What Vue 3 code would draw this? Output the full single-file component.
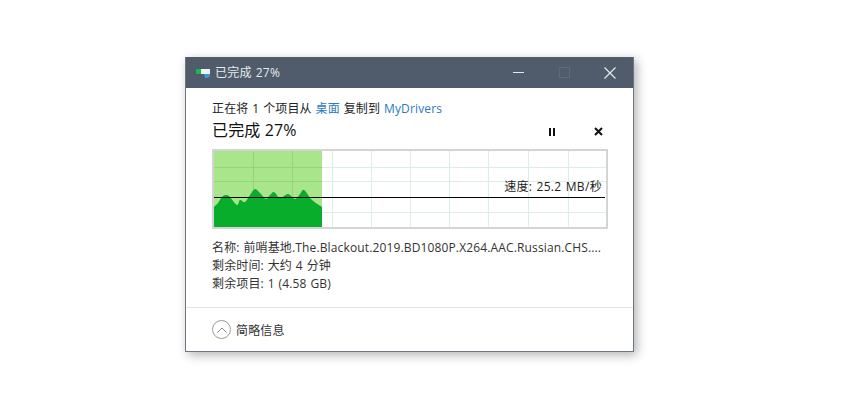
<script setup>
const hLines = [17, 31, 62]
const vLines = [41, 80, 120, 159, 198, 237, 276, 316, 356]
const peak = [[2,57],[6,53],[10,47],[14,45],[18,47],[25,55],[28,50],[33,52],[38,45],[43,39],[48,43],[54,49],[58,45],[62,42],[68,48],[76,44],[83,49],[88,44],[92,40],[100,50],[110,57]]

function smooth(points) {
  let d = `M2 77L${points[0][0]} ${points[0][1]}`
  for (let i = 0; i < points.length - 1; i++) {
    const p0 = points[Math.max(i - 1, 0)]
    const p1 = points[i]
    const p2 = points[i + 1]
    const p3 = points[Math.min(i + 2, points.length - 1)]
    const c1x = p1[0] + (p2[0] - p0[0]) / 6
    const c1y = p1[1] + (p2[1] - p0[1]) / 6
    const c2x = p2[0] - (p3[0] - p1[0]) / 6
    const c2y = p2[1] - (p3[1] - p1[1]) / 6
    d += `C${c1x} ${c1y} ${c2x} ${c2y} ${p2[0]} ${p2[1]}`
  }
  return d + 'L110 77Z'
}
const area = smooth(peak)
</script>

<template>
  <div class="page">
    <div class="win">
      <header class="title">
        <svg class="app" width="14" height="10" viewBox="0 0 14 10">
          <rect x="0" y="1" width="5" height="5" fill="#19b84a" />
          <rect x="5" y="1" width="9" height="5" fill="#eef3f5" />
          <path d="M8 6h6v2l-2 2H9z" fill="#3f97da" />
        </svg>
        <span class="title-text">已完成 27%</span>
        <div class="caps">
          <span class="cap"><i class="min"></i></span>
          <span class="cap"><i class="max"></i></span>
          <span class="cap">
            <svg width="12" height="12" viewBox="0 0 12 12"><path d="M.5.5l11 11M11.5.5l-11 11" stroke="#e6e9ec" stroke-width="1.2" fill="none" /></svg>
          </span>
        </div>
      </header>
      <main class="body">
        <p class="from">正在将 1 个项目从 <a>桌面</a> 复制到 <a>MyDrivers</a></p>
        <div class="head">
          <h1>已完成 27%</h1>
          <div class="ctrl">
            <svg width="8" height="8" viewBox="0 0 8 8"><path d="M1 0h2v8H1zM5 0h2v8H5z" fill="#111" /></svg>
            <svg width="9" height="9" viewBox="0 0 9 9"><path d="M1 1l7 7M8 1l-7 7" stroke="#111" stroke-width="2" fill="none" /></svg>
          </div>
        </div>
        <div class="chart">
          <svg width="396" height="80" viewBox="0 -1 396 80">
            <rect x="2" y="1" width="108" height="76" fill="#a8e58b" />
            <g stroke="#dcefe3" stroke-width="1">
              <line v-for="y in hLines" :key="y" x1="2" x2="394" :y1="y + .5" :y2="y + .5" />
              <line v-for="x in vLines" :key="x" :x1="x + .5" :x2="x + .5" y1="1" y2="77" />
            </g>
            <g stroke="#95d37c" stroke-width="1">
              <line v-for="y in hLines" :key="'g' + y" x1="2" x2="110" :y1="y + .5" :y2="y + .5" />
              <line v-for="x in vLines.slice(0, 2)" :key="'v' + x" :x1="x + .5" :x2="x + .5" y1="1" y2="77" />
            </g>
            <path :d="area" fill="#08ae2b" />
            <line x1="2" x2="393" y1="47.5" y2="47.5" stroke="#000" />
          </svg>
          <span class="speed">速度: 25.2 MB/秒</span>
        </div>
        <ul class="info">
          <li>名称: 前哨基地.The.Blackout.2019.BD1080P.X264.AAC.Russian.CHS....</li>
          <li>剩余时间: 大约 4 分钟</li>
          <li>剩余项目: 1 (4.58 GB)</li>
        </ul>
      </main>
      <footer class="foot">
        <span class="toggle">
          <svg width="10" height="6" viewBox="0 0 10 6"><path d="M.5 5.500L5 1l4.500 4.500" stroke="#8a8a8a" fill="none" /></svg>
        </span>
        <span>简略信息</span>
      </footer>
    </div>
  </div>
</template>

<style>
html, body { background: #fff; }
</style>

<style scoped>
.page {
  width: 841px;
  height: 410px;
  padding: 57px 0 0 185px;
  box-sizing: border-box;
  overflow: hidden;
  background: #fff;
  font-family: "Open Sans", "Noto Sans CJK SC", sans-serif;
  font-size: 12px;
  letter-spacing: .14px;
  word-spacing: .6px;
  color: #222;
}
.win {
  width: 447px;
  height: 294px;
  border: 1px solid #6d7680;
  border-top: 0;
  display: flex;
  flex-direction: column;
  background: #fff;
  box-shadow: 3px 3px 10px rgba(0, 0, 0, .3);
}
.title {
  height: 31px;
  flex: none;
  background: #505c6b;
  color: #e8ebee;
  display: flex;
  align-items: center;
  padding-left: 10px;
}
.app { margin-right: 5px; }
.title-text { line-height: 31px; letter-spacing: .25px; }
.caps { margin-left: auto; display: flex; align-items: center; }
.cap { width: 46px; height: 31px; display: flex; align-items: center; justify-content: center; }
.min { width: 11px; height: 1px; background: #e6e9ec; }
.max { width: 9px; height: 9px; border: 1px solid #5f6a78; }
.body { flex: 1; padding: 12px 26px 0 26px; }
.from { margin: 0; line-height: 18px; height: 18px; white-space: nowrap; }
.from a { color: #2b79c2; }
.head { display: flex; align-items: center; justify-content: space-between; height: 25px; }
h1 { margin: 0; font-size: 16px; font-weight: 400; line-height: 25px; color: #111; letter-spacing: .15px; word-spacing: 0; }
.ctrl { display: flex; align-items: center; gap: 38px; padding: 2px 4px 0 0; }
.chart {
  position: relative;
  width: 396px;
  height: 80px;
  margin-top: 6px;
  line-height: 0;
  outline: 2px solid #d4d4d4;
  outline-offset: -2px;
}
.chart svg { display: block; }
.speed { position: absolute; right: 6px; top: 29px; line-height: 18px; color: #222; white-space: nowrap; letter-spacing: .35px; word-spacing: .6px; }
.info { list-style: none; margin: 10px 0 0; padding: 0; }
.info li { line-height: 18px; white-space: nowrap; color: #333; }
.foot {
  height: 43px;
  flex: none;
  border-top: 1px solid #e3e3e3;
  display: flex;
  align-items: center;
  gap: 5px;
  padding-left: 26px;
  color: #333;
}
.toggle {
  width: 17px;
  height: 17px;
  border: 1px solid #9a9a9a;
  border-radius: 50%;
  display: flex;
  align-items: center;
  justify-content: center;
}
</style>
